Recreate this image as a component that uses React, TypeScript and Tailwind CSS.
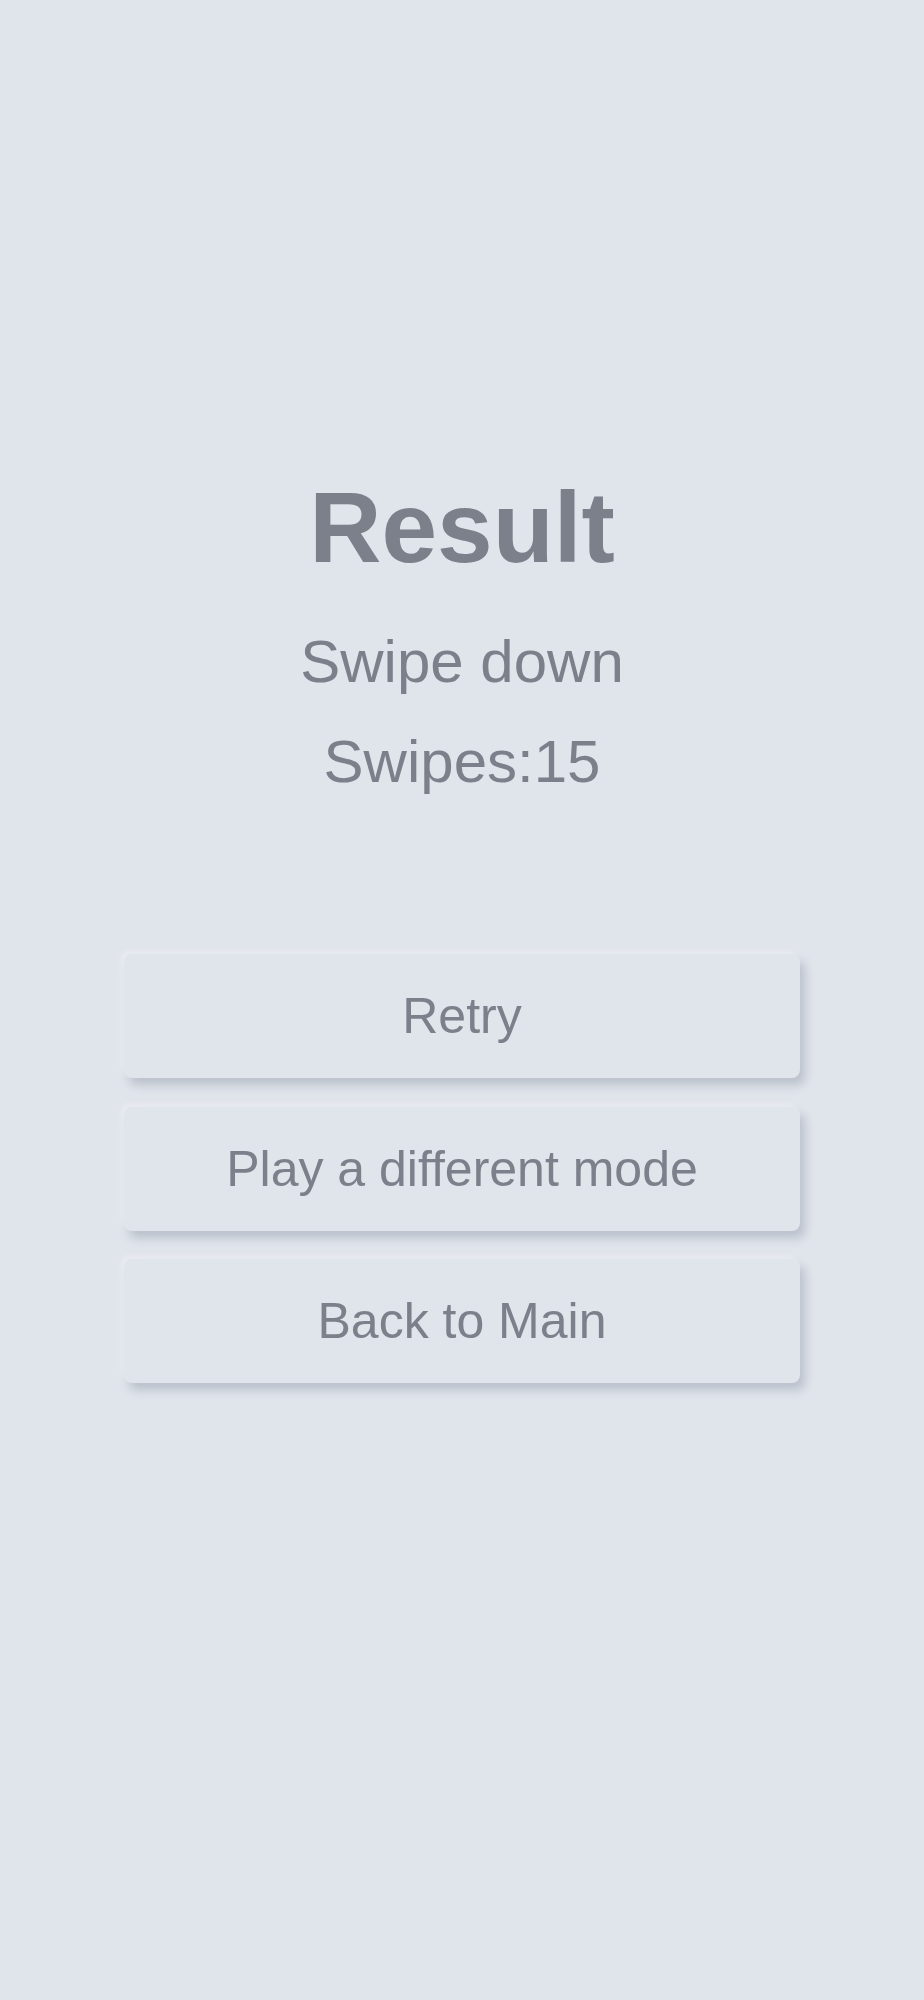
const buttons = ["Retry", "Play a different mode", "Back to Main"];

export default function App() {
  return (
    <div
      className="min-h-screen w-full bg-[#e0e4eb] flex flex-col items-center pt-[477px] text-[#7b808b]"
      style={{ fontFamily: '"Liberation Sans", Arial, sans-serif' }}
    >
      <h1 className="text-[100px] leading-[100px] font-bold">Result</h1>
      <p className="mt-[55px] text-[60px] leading-[60px]">Swipe down</p>
      <p className="mt-[40px] text-[60px] leading-[60px]">Swipes:15</p>

      <div className="mt-[162px] flex flex-col gap-[28.5px]">
        {buttons.map((label) => (
          <button
            key={label}
            className="w-[676px] h-[124px] rounded-[8px] bg-[#e0e4eb] text-[50px] leading-none text-[#7b808b] shadow-[5px_7px_10px_rgba(110,120,140,0.32),-3px_-3px_6px_rgba(255,255,255,0.35)] flex items-center justify-center"
          >
            {label}
          </button>
        ))}
      </div>
    </div>
  );
}
